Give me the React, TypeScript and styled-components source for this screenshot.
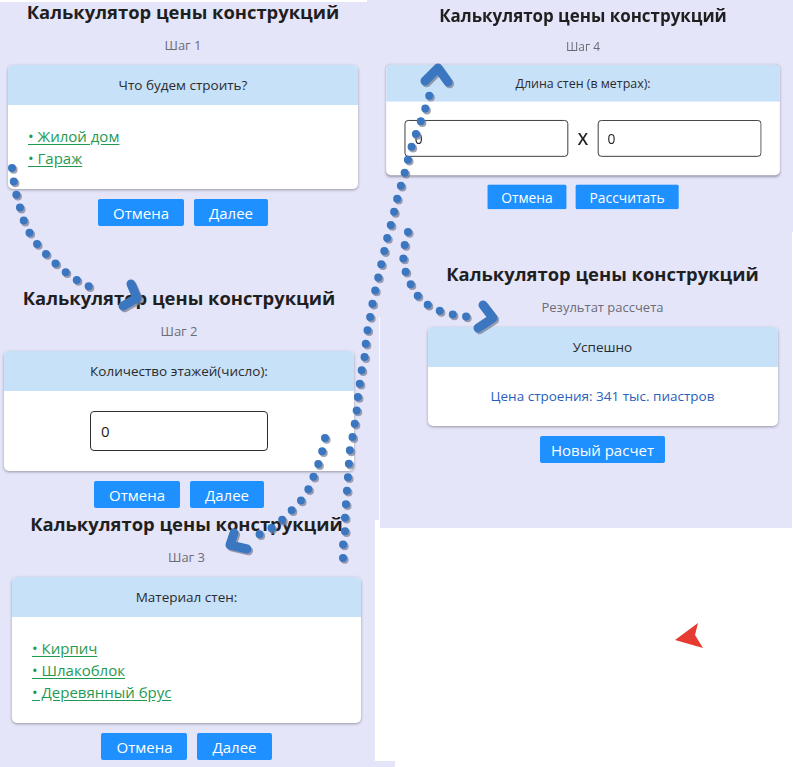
import styled, { createGlobalStyle } from "styled-components";

const GlobalStyle = createGlobalStyle`
  html, body {
    margin: 0;
    padding: 0;
    background: #ffffff;
  }
  body {
    font-family: "Open Sans", "Noto Sans", sans-serif;
  }
`;

const TITLE = "Калькулятор цены конструкций";

const ARROWS: { dots: number[][]; head: number[][] }[] = [
  {
    dots: [
      [12, 168], [14, 183], [17, 198], [21, 211], [25, 225], [32, 237], [40, 248],
      [50, 258], [60, 268], [72, 277], [83, 284], [98, 290],
    ],
    head: [[131, 284], [137, 298], [123, 306]],
  },
  {
    dots: [
      [325, 438], [322, 452], [318, 465], [313, 478], [308, 490], [300, 502],
      [290, 512], [279, 523], [267, 531], [253, 537],
    ],
    head: [[234, 533], [230, 545], [247, 549]],
  },
  {
    dots: [
      [343, 558], [343, 545], [345, 532], [345, 517], [346, 503], [347, 490],
      [348, 476], [349, 462], [350, 448], [353, 435], [355, 422], [357, 408],
      [358, 395], [360, 382], [362, 368], [365, 355], [366, 340], [368, 327],
      [371, 313], [373, 300], [376, 287], [379, 274], [382, 261], [385, 248],
      [388, 234], [392, 221], [395, 208], [398, 195], [402, 182], [406, 168],
      [409, 155], [413, 142], [418, 128], [423, 116], [427, 103], [431, 90],
    ],
    head: [[425, 81], [438, 68], [448, 82]],
  },
  {
    dots: [
      [408, 232], [405, 243], [403, 256], [405, 270], [410, 283], [417, 295],
      [428, 305], [440, 311], [455, 315], [470, 317],
    ],
    head: [[483, 305], [493, 318], [478, 328]],
  },
];

const toPath = (pts: number[][]) =>
  pts.map((p, i) => `${i === 0 ? "M" : "L"}${p[0]} ${p[1]}`).join(" ");

export default function App() {
  return (
    <>
      <GlobalStyle />
      <Canvas>
        <Blank $x={0} $y={0} $w={367} $h={2} />
        <Blank $x={379} $y={317} $w={1} $h={203} />
        <Blank $x={792} $y={232} $w={1} $h={296} />
        <Blank $x={375} $y={520} $w={5} $h={241} />
        <Blank $x={380} $y={528} $w={413} $h={233} />
        <Blank $x={395} $y={761} $w={398} $h={6} />

        <Window $left={0} $top={0} $width={366}>
          <Sheet>
            <Title>{TITLE}</Title>
            <Subtitle>Шаг 1</Subtitle>
            <Card $width={350}>
              <CardHeader>Что будем строить?</CardHeader>
              <CardBody>
                <ChoiceList>
                  <Choice href="#">• Жилой дом</Choice>
                  <Choice href="#">• Гараж</Choice>
                </ChoiceList>
              </CardBody>
            </Card>
            <Actions>
              <Button>Отмена</Button>
              <Button>Далее</Button>
            </Actions>
          </Sheet>
        </Window>

        <Window $left={0} $top={286} $width={358}>
          <Sheet>
            <Title>{TITLE}</Title>
            <Subtitle>Шаг 2</Subtitle>
            <Card $width={350}>
              <CardHeader>Количество этажей(число):</CardHeader>
              <CardBody $center>
                <NumberField $width={178} defaultValue="0" />
              </CardBody>
            </Card>
            <Actions>
              <Button>Отмена</Button>
              <Button>Далее</Button>
            </Actions>
          </Sheet>
        </Window>

        <Window $left={0} $top={512} $width={373}>
          <Sheet>
            <Title>{TITLE}</Title>
            <Subtitle>Шаг 3</Subtitle>
            <Card $width={349}>
              <CardHeader>Материал стен:</CardHeader>
              <CardBody>
                <ChoiceList>
                  <Choice href="#">• Кирпич</Choice>
                  <Choice href="#">• Шлакоблок</Choice>
                  <Choice href="#">• Деревянный брус</Choice>
                </ChoiceList>
              </CardBody>
            </Card>
            <Actions>
              <Button>Отмена</Button>
              <Button>Далее</Button>
            </Actions>
          </Sheet>
        </Window>

        <Window $left={367} $top={5} $width={432}>
          <Sheet $scale={0.92}>
            <Title>{TITLE}</Title>
            <Subtitle>Шаг 4</Subtitle>
            <Card $width={428}>
              <CardHeader>Длина стен (в метрах):</CardHeader>
              <CardBody>
                <SizeRow>
                  <NumberField defaultValue="0" />
                  <Times>X</Times>
                  <NumberField defaultValue="0" />
                </SizeRow>
              </CardBody>
            </Card>
            <Actions>
              <Button>Отмена</Button>
              <Button>Рассчитать</Button>
            </Actions>
          </Sheet>
        </Window>

        <Window $left={412} $top={262} $width={381}>
          <Sheet>
            <Title>{TITLE}</Title>
            <Subtitle>Результат рассчета</Subtitle>
            <Card $width={350}>
              <CardHeader>Успешно</CardHeader>
              <CardBody $center>
                <Price>Цена строения: 341 тыс. пиастров</Price>
              </CardBody>
            </Card>
            <Actions>
              <Button $large>Новый расчет</Button>
            </Actions>
          </Sheet>
        </Window>

        <Overlay width="793" height="767" viewBox="0 0 793 767">
          {ARROWS.map((a, i) => (
            <g key={i}>
              <g transform="translate(1.6 1.8)" stroke="#7d8196" opacity="0.75">
                <path d={toPath(a.dots)} fill="none" strokeWidth="8" strokeLinecap="round" strokeDasharray="0 13.5" />
                <path d={toPath(a.head)} fill="none" strokeWidth="9" strokeLinecap="round" strokeLinejoin="round" />
              </g>
              <g stroke="#3b77c0">
                <path d={toPath(a.dots)} fill="none" strokeWidth="8" strokeLinecap="round" strokeDasharray="0 13.5" />
                <path d={toPath(a.head)} fill="none" strokeWidth="9" strokeLinecap="round" strokeLinejoin="round" />
              </g>
            </g>
          ))}
          <polygon points="675,640 698,623 695,635 703,648" fill="#e53b30" />
        </Overlay>
      </Canvas>
    </>
  );
}

const Canvas = styled.div`
  position: relative;
  width: 793px;
  height: 767px;
  overflow: hidden;
  background: #e5e5fa;
`;

const Blank = styled.div<{ $x: number; $y: number; $w: number; $h: number }>`
  position: absolute;
  left: ${(p) => p.$x}px;
  top: ${(p) => p.$y}px;
  width: ${(p) => p.$w}px;
  height: ${(p) => p.$h}px;
  background: #ffffff;
`;

const Window = styled.section<{ $left: number; $top: number; $width: number }>`
  position: absolute;
  left: ${(p) => p.$left}px;
  top: ${(p) => p.$top}px;
  width: ${(p) => p.$width}px;
`;

const Sheet = styled.div<{ $scale?: number }>`
  display: flex;
  flex-direction: column;
  align-items: center;
  transform: scale(${(p) => p.$scale ?? 1});
  transform-origin: top center;
`;

const Title = styled.h1`
  margin: 0;
  font-size: 18.4px;
  line-height: 24px;
  font-weight: 700;
  color: #1f1f1f;
  white-space: nowrap;
`;

const Subtitle = styled.p`
  margin: 12px 0 0;
  font-size: 13px;
  line-height: 18px;
  color: #6c6c74;
`;

const Card = styled.div<{ $width: number }>`
  margin-top: 11px;
  width: ${(p) => p.$width}px;
  background: #ffffff;
  border-radius: 5px;
  overflow: hidden;
  box-shadow: 0 1px 3px rgba(0, 0, 0, 0.35);
`;

const CardHeader = styled.div`
  height: 40px;
  display: flex;
  align-items: center;
  justify-content: center;
  background: #c7e1f9;
  font-size: 13.5px;
  color: #2b2b2b;
`;

const CardBody = styled.div<{ $center?: boolean }>`
  padding: 20px;
  display: flex;
  justify-content: ${(p) => (p.$center ? "center" : "flex-start")};
`;

const ChoiceList = styled.div`
  display: flex;
  flex-direction: column;
`;

const Choice = styled.a`
  font-size: 15px;
  line-height: 22px;
  color: #1f9a52;
  text-decoration: underline;
  text-underline-offset: 2px;
`;

const NumberField = styled.input<{ $width?: number }>`
  box-sizing: border-box;
  width: ${(p) => (p.$width ? `${p.$width}px` : "0")};
  flex: ${(p) => (p.$width ? "none" : "1")};
  min-width: 0;
  height: 40px;
  padding: 0 10px;
  border: 1px solid #2e2e2e;
  border-radius: 4px;
  font-family: inherit;
  font-size: 15px;
  color: #222222;
  background: #ffffff;
`;

const SizeRow = styled.div`
  flex: 1;
  min-width: 0;
  display: flex;
  align-items: center;
  gap: 10px;
`;

const Times = styled.span`
  font-size: 18px;
  font-weight: 600;
  color: #222222;
`;

const Price = styled.p`
  margin: 0;
  font-size: 13.5px;
  line-height: 19px;
  color: #2a5fbd;
`;

const Actions = styled.div`
  margin-top: 10px;
  display: flex;
  gap: 10px;
`;

const Button = styled.button<{ $large?: boolean }>`
  height: 27px;
  padding: 0 ${(p) => (p.$large ? 11 : 15)}px;
  border: none;
  border-radius: 2px;
  background: #1e90ff;
  color: #ffffff;
  font-family: inherit;
  font-size: 15px;
`;

const Overlay = styled.svg`
  position: absolute;
  left: 0;
  top: 0;
  pointer-events: none;
`;
